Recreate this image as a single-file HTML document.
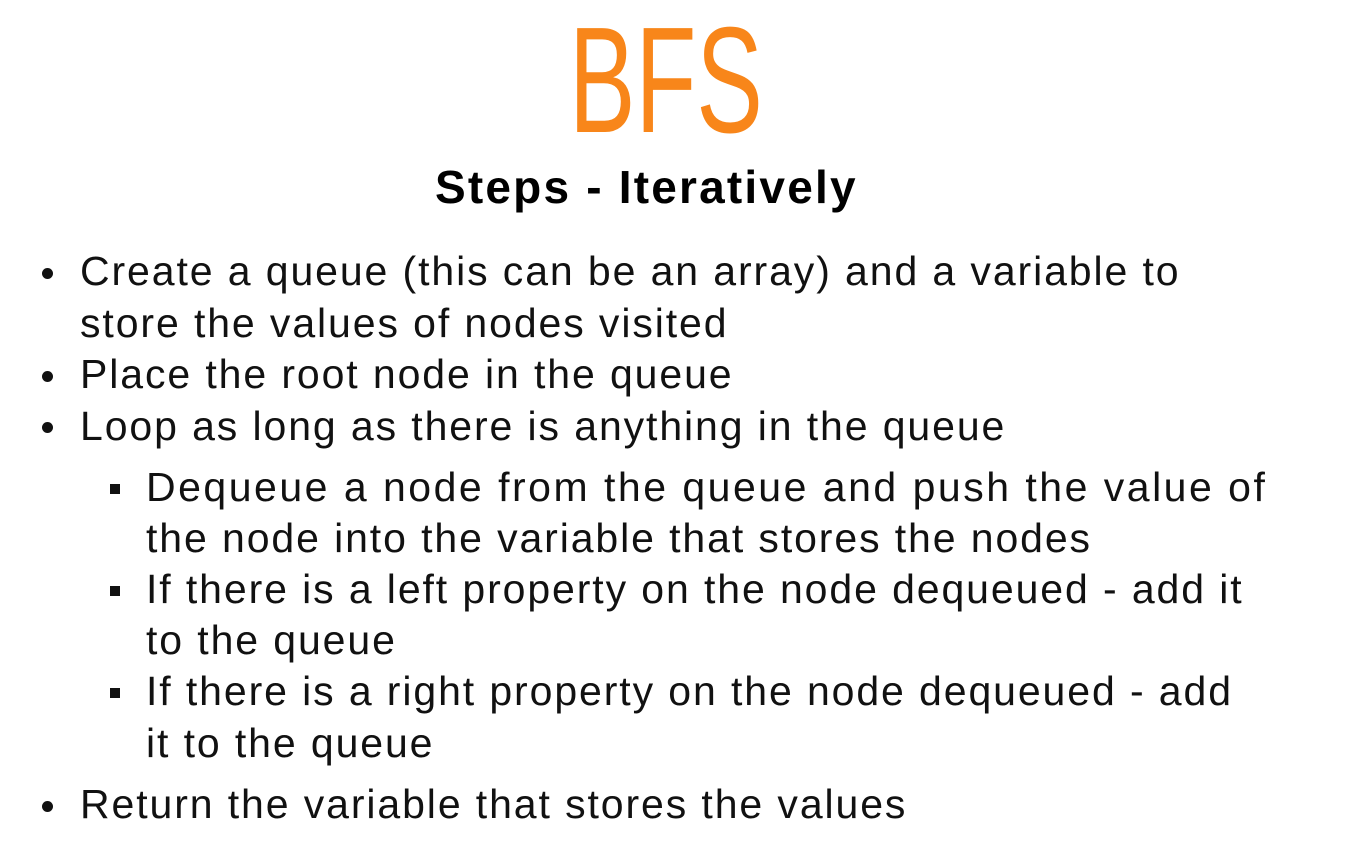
<!DOCTYPE html>
<html><head><meta charset="utf-8"><style>
body{margin:0;width:1367px;height:849px;background:#fff;overflow:hidden;position:relative;font-family:"Liberation Sans",sans-serif;color:#111}
.t{position:absolute;font-size:41px;line-height:52px;letter-spacing:1.9px;white-space:nowrap;margin-top:-2px}
.b{position:absolute;width:11px;height:11px;border-radius:50%;background:#111;left:42px}
.s{position:absolute;width:10px;height:10px;background:#111;left:110px}
</style></head><body>
<div style="position:absolute;left:569px;top:5px;width:292px;font-size:151px;line-height:150px;color:#F8861A;transform:scaleX(0.66);transform-origin:0 0;">BFS</div>
<div style="position:absolute;left:435px;top:160px;font-size:46px;font-weight:bold;line-height:54px;letter-spacing:2.2px;color:#000">Steps - Iteratively</div>

<div class="b" style="top:268px"></div>
<div class="t" style="left:80px;top:247px">Create a queue (this can be an array) and a variable to</div>
<div class="t" style="left:80px;top:299px">store the values of nodes visited</div>
<div class="b" style="top:371px"></div>
<div class="t" style="left:80px;top:350px">Place the root node in the queue</div>
<div class="b" style="top:422px"></div>
<div class="t" style="left:80px;top:402px">Loop as long as there is anything in the queue</div>

<div class="s" style="top:484px"></div>
<div class="t" style="left:146px;top:463px;letter-spacing:2.5px">Dequeue a node from the queue and push the value of</div>
<div class="t" style="left:146px;top:514px">the node into the variable that stores the nodes</div>
<div class="s" style="top:586px"></div>
<div class="t" style="left:146px;top:565px">If there is a left property on the node dequeued - add it</div>
<div class="t" style="left:146px;top:616px">to the queue</div>
<div class="s" style="top:688px"></div>
<div class="t" style="left:146px;top:667px">If there is a right property on the node dequeued - add</div>
<div class="t" style="left:146px;top:719px">it to the queue</div>

<div class="b" style="top:801px"></div>
<div class="t" style="left:80px;top:780px">Return the variable that stores the values</div>
</body></html>
